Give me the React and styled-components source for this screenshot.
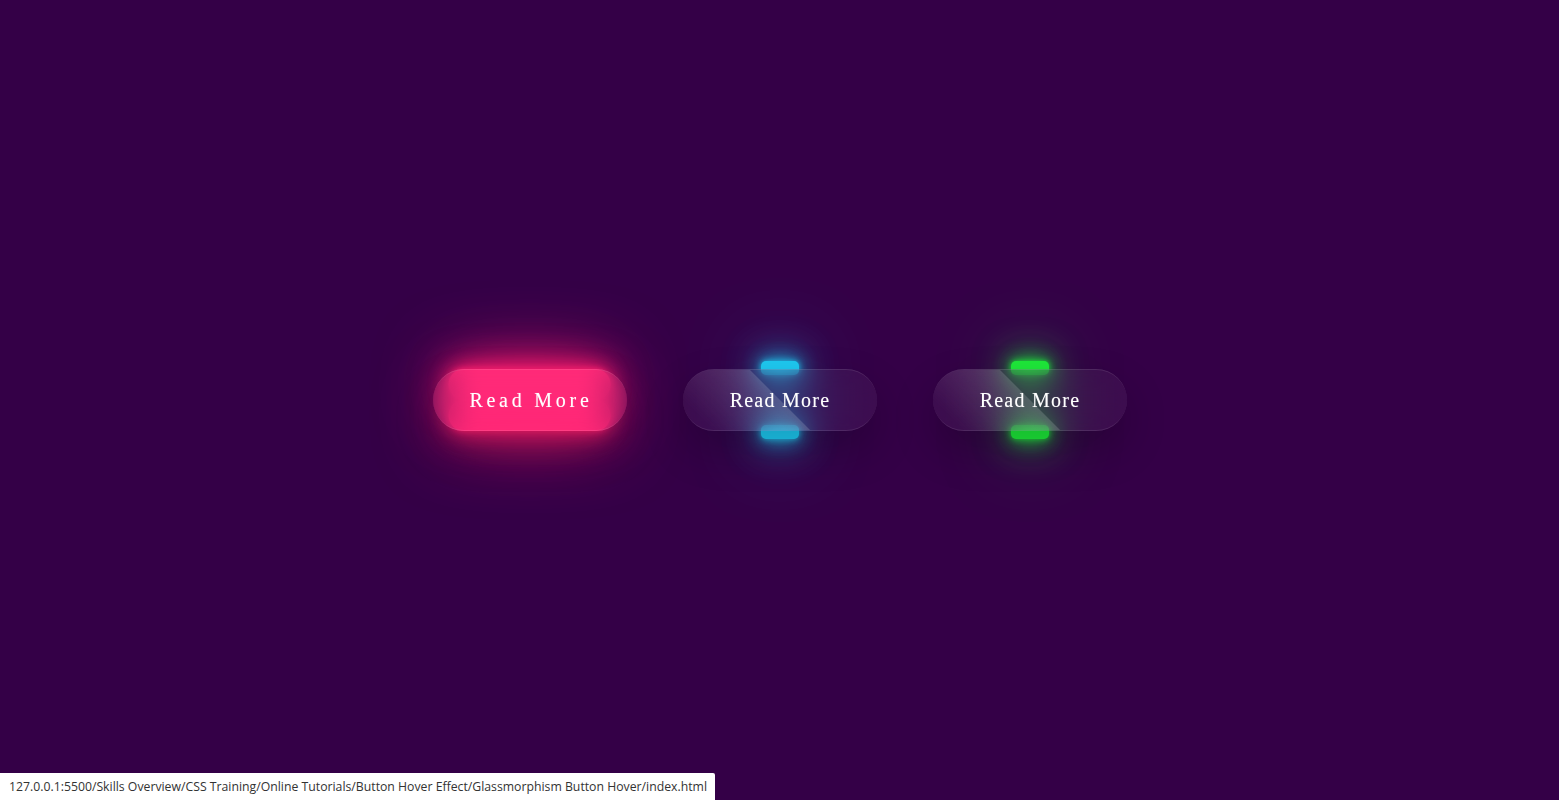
import React from "react";
import styled, { createGlobalStyle, css } from "styled-components";

const Global = createGlobalStyle`
  html, body { margin: 0; padding: 0; }
  body { background: #340047; font-family: "Liberation Serif", serif; }
`;

const Page = styled.main`
  min-height: 100vh;
  display: flex;
  justify-content: center;
  align-items: center;
`;

const Row = styled.div`
  display: flex;
  justify-content: center;
  align-items: center;
`;

const lamp = (c) => css`
  background: ${c};
  box-shadow: 0 0 6px ${c}, 0 0 19px ${c}, 0 0 38px ${c}, 0 0 75px ${c};
`;

const Btn = styled.div`
  position: relative;
  width: 194px;
  height: 62px;
  margin: 0 28px;
  display: flex;
  justify-content: center;
  align-items: center;

  &::before,
  &::after {
    content: "";
    position: absolute;
    left: 50%;
    transform: translateX(-50%);
    width: 38px;
    height: 14px;
    border-radius: 5px;
    ${(p) => lamp(p.$color)}
  }
  &::before { bottom: -8px; }
  &::after { top: -8px; }

  ${(p) =>
    p.$active &&
    css`
      &::before,
      &::after {
        width: 84%;
        height: 50%;
        border-radius: 37px;
      }
      &::before { bottom: 0; }
      &::after { top: 0; }
    `}
`;

const Glass = styled.a`
  position: absolute;
  inset: 0;
  z-index: 1;
  display: flex;
  justify-content: center;
  align-items: center;
  background: rgba(255, 255, 255, 0.05);
  box-shadow: 0 19px 44px rgba(0, 0, 0, 0.2);
  border-top: 1px solid rgba(255, 255, 255, 0.1);
  border-bottom: 1px solid rgba(255, 255, 255, 0.1);
  border-radius: 37px;
  color: #fff;
  font-size: 20px;
  font-weight: 400;
  letter-spacing: ${(p) => (p.$active ? "3.75px" : "1.25px")};
  text-decoration: none;
  overflow: hidden;
  backdrop-filter: blur(15px);
  -webkit-backdrop-filter: blur(15px);
  box-sizing: border-box;

  &::before {
    content: "";
    position: absolute;
    top: 0;
    left: 0;
    width: 50%;
    height: 100%;
    background: linear-gradient(to left, rgba(255, 255, 255, 0.15), transparent);
    transform: skewX(45deg) translateX(${(p) => (p.$active ? "250px" : "0")});
  }
`;

const Label = styled.span`
  position: relative;
  padding-left: ${(p) => (p.$active ? "3px" : "1px")};
  text-shadow: 0 0 1px rgba(255, 255, 255, 0.4);
`;

const StatusBar = styled.div`
  position: fixed;
  left: 0;
  bottom: 0;
  height: 27px;
  padding: 0 8px 0 9px;
  display: flex;
  align-items: center;
  background: #fff;
  color: #333;
  font-family: "Open Sans", "Noto Sans", sans-serif;
  font-size: 12.25px;
  border-top-right-radius: 2px;
`;

const buttons = [
  { color: "#ff1f71", active: true },
  { color: "#1ec8f0", active: false },
  { color: "#1ee83a", active: false },
];

export default function App() {
  return (
    <>
      <Global />
      <Page>
        <Row>
          {buttons.map((b, i) => (
            <Btn key={i} $color={b.color} $active={b.active}>
              <Glass href="#" $active={b.active}>
                <Label $active={b.active}>Read More</Label>
              </Glass>
            </Btn>
          ))}
        </Row>
      </Page>
      <StatusBar>
        127.0.0.1:5500/Skills Overview/CSS Training/Online Tutorials/Button Hover Effect/Glassmorphism Button Hover/index.html
      </StatusBar>
    </>
  );
}
